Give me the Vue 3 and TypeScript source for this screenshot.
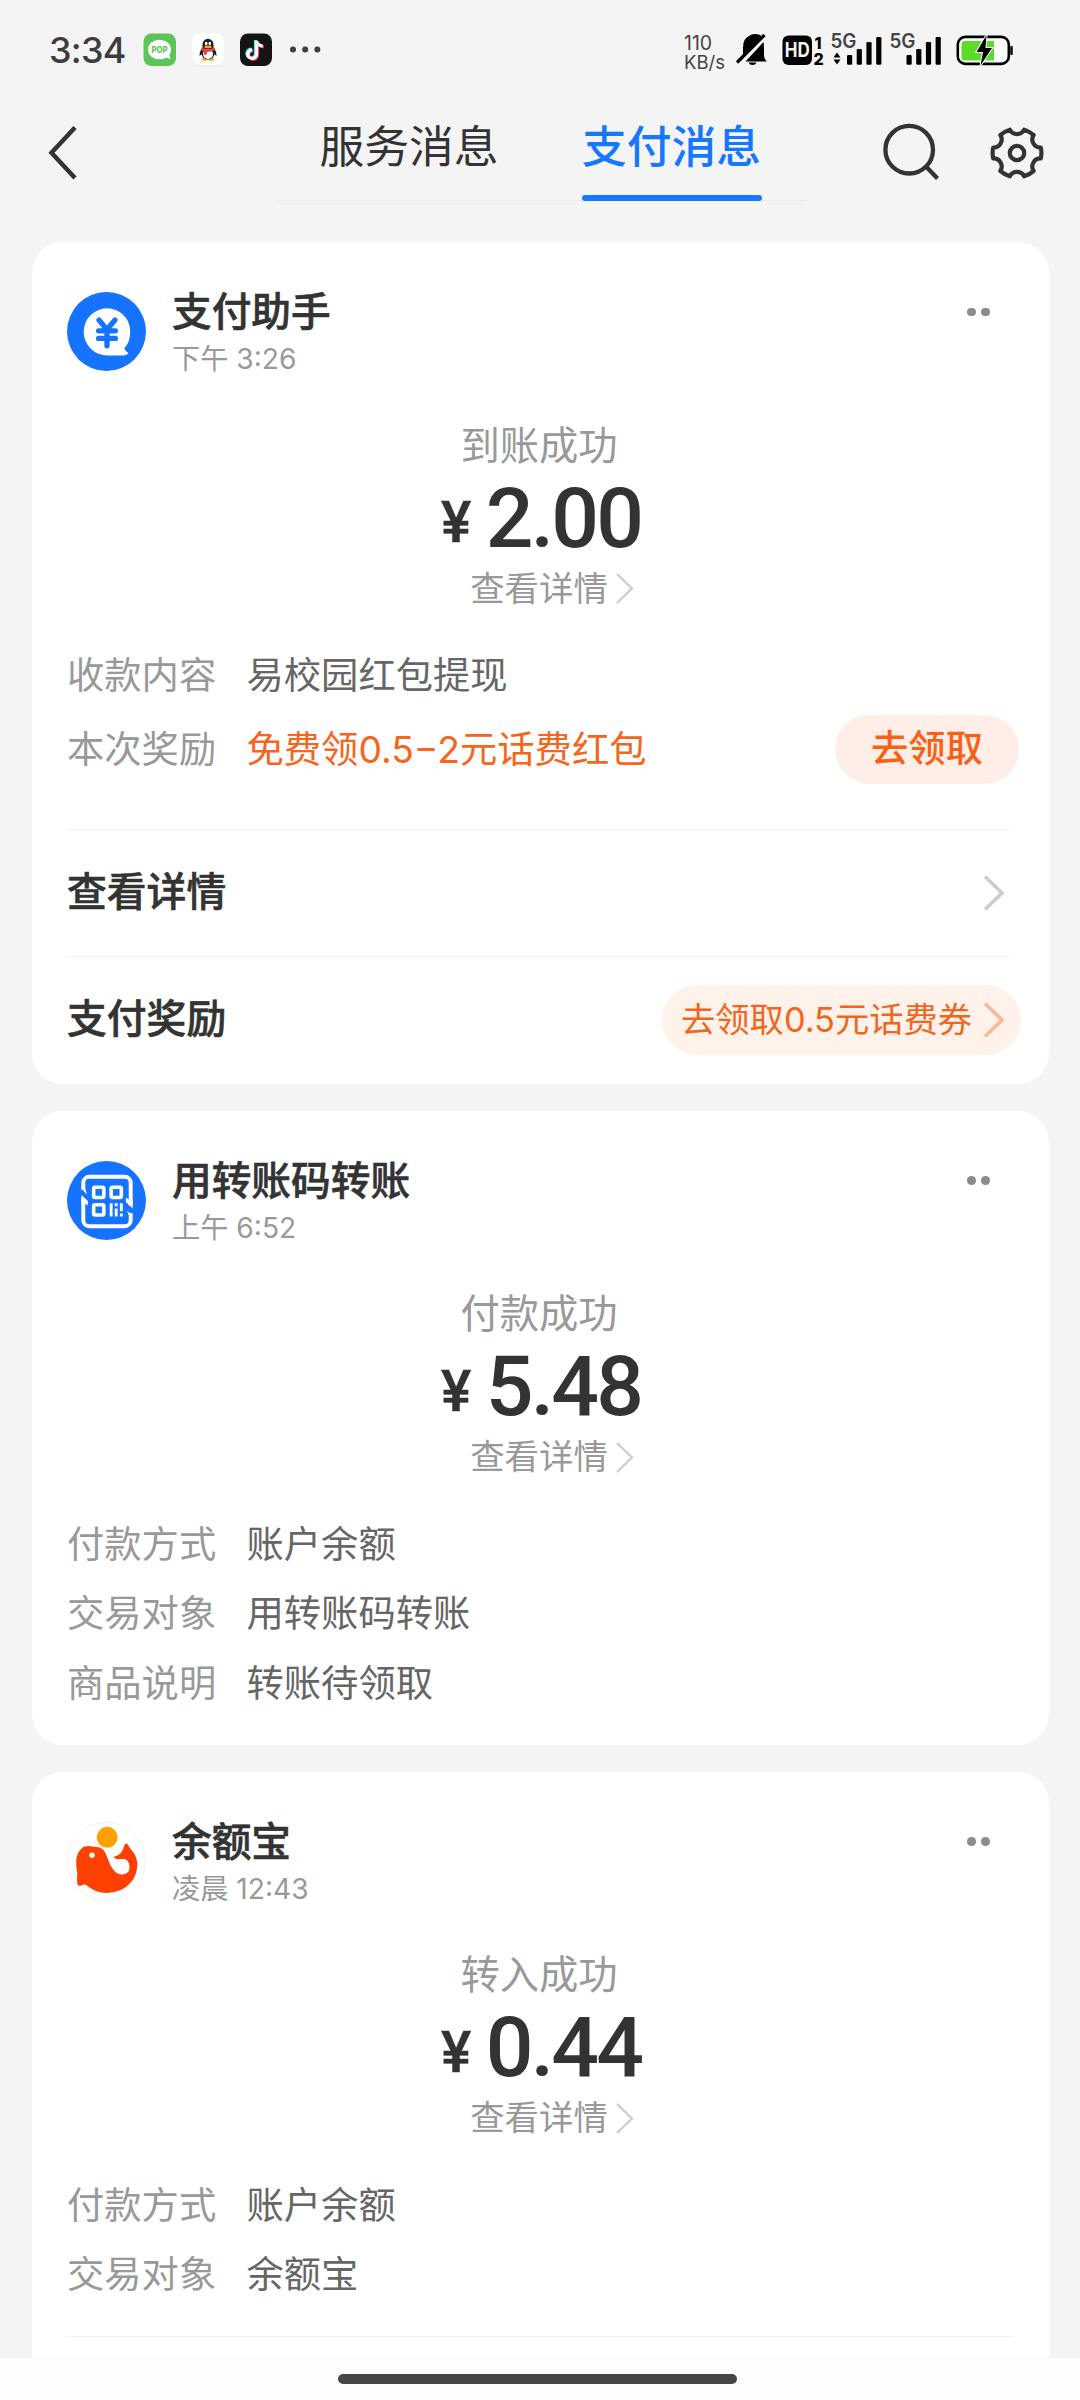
<script setup lang="ts">
interface Row {
  label: string
  value: string
  action?: string
}
interface Footer {
  title: string
  pill?: string
}
interface Message {
  icon: 'assistant' | 'qrcode' | 'whale'
  name: string
  time: string
  status: string
  amount: string
  rows: Row[]
  footers: Footer[]
}

const messages: Message[] = [
  {
    icon: 'assistant',
    name: '支付助手',
    time: '下午 3:26',
    status: '到账成功',
    amount: '2.00',
    rows: [
      { label: '收款内容', value: '易校园红包提现' },
      { label: '本次奖励', value: '免费领0.5−2元话费红包', action: '去领取' },
    ],
    footers: [{ title: '查看详情' }, { title: '支付奖励', pill: '去领取0.5元话费券' }],
  },
  {
    icon: 'qrcode',
    name: '用转账码转账',
    time: '上午 6:52',
    status: '付款成功',
    amount: '5.48',
    rows: [
      { label: '付款方式', value: '账户余额' },
      { label: '交易对象', value: '用转账码转账' },
      { label: '商品说明', value: '转账待领取' },
    ],
    footers: [],
  },
  {
    icon: 'whale',
    name: '余额宝',
    time: '凌晨 12:43',
    status: '转入成功',
    amount: '0.44',
    rows: [
      { label: '付款方式', value: '账户余额' },
      { label: '交易对象', value: '余额宝' },
    ],
    footers: [{ title: '' }],
  },
]

// Six-lobed gear: outer arcs joined by concave notches.
function gearPath(r: number, notch: number, cx: number, cy: number): string {
  const at = (deg: number) => {
    const a = ((deg - 90) * Math.PI) / 180
    return `${(cx + r * Math.cos(a)).toFixed(2)} ${(cy + r * Math.sin(a)).toFixed(2)}`
  }
  let d = `M${at(-17)}`
  for (let k = 0; k < 6; k++) {
    const c = k * 60
    d += `A${notch} ${notch} 0 0 0 ${at(c + 17)}A${r} ${r} 0 0 1 ${at(c + 43)}`
  }
  return d + 'Z'
}
const gear = gearPath(24.4, 8, 28, 28)
</script>

<template>
  <div class="screen">
    <div class="statusbar">
      <div class="clock">3:34</div>
      <svg class="app-icons" width="190" height="40" viewBox="140 30 190 40">
        <rect x="143.5" y="33.5" width="32.5" height="32.5" rx="8" fill="#5ec458" />
        <ellipse cx="159.5" cy="49.5" rx="11.5" ry="9.8" fill="#fff" />
        <path d="M164 57l6.5 2-1.500-5z" fill="#fff" />
        <text x="159.500" y="52.600" text-anchor="middle" font-size="8.500" font-weight="800" textLength="16" lengthAdjust="spacingAndGlyphs" fill="#5ec458">POP</text>
        <rect x="192" y="34" width="32" height="32.500" rx="8" fill="#e4e4e4" />
        <rect x="192" y="33.500" width="32" height="32" rx="8" fill="#fff" />
        <path d="M202 48q-3 4-2.500 8l2.500-2zM214 48q3 4 2.500 8l-2.500-2z" fill="#1d1f24" />
        <ellipse cx="204.500" cy="59.500" rx="3" ry="1.300" fill="#f5a623" />
        <ellipse cx="211.500" cy="59.500" rx="3" ry="1.300" fill="#f5a623" />
        <ellipse cx="208" cy="52.500" rx="6.800" ry="7" fill="#1d1f24" />
        <ellipse cx="208" cy="54" rx="5" ry="5" fill="#fff" />
        <path d="M202.500 48v-3.500a5.500 5.800 0 0 1 11 0v3.500z" fill="#1d1f24" />
        <ellipse cx="206.200" cy="43.500" rx="1.300" ry="1.800" fill="#fff" />
        <ellipse cx="209.800" cy="43.500" rx="1.300" ry="1.800" fill="#fff" />
        <ellipse cx="208" cy="46.900" rx="3.800" ry="1.400" fill="#f5a623" />
        <path d="M201.500 47.500q6.500 3.400 13 0l.500 2.500q-4 2-8 2l-.3 2.700h-2.600l-.2-3.200q-1.500-.5-2.700-1.400z" fill="#ea4335" />
        <rect x="240" y="33.500" width="32" height="32.500" rx="8" fill="#141414" />
        <g fill="none" stroke-width="3.200">
          <path d="M255.500 40v13.500a4.300 4.300 0 1 1-4.300-4.300M255.500 41q1.500 4.300 6.300 4.500" stroke="#25f4ee" />
          <path d="M257.500 41.500v13.500a4.300 4.300 0 1 1-4.300-4.300M257.500 42.500q1.500 4 6.300 4.300" stroke="#fe2c55" />
          <path d="M256.500 40.700v13.500a4.300 4.300 0 1 1-4.300-4.300M256.500 41.500q1.500 4.300 6.300 4.500" stroke="#fff" />
        </g>
        <g fill="#3d3d3d">
          <circle cx="293" cy="49.500" r="3" />
          <circle cx="305.200" cy="49.500" r="3" />
          <circle cx="317.300" cy="49.500" r="3" />
        </g>
      </svg>
      <div class="netspeed"><span>110</span><span class="unit">KB/s</span></div>
      <svg class="signals" width="290" height="40" viewBox="730 30 290 40">
        <path d="M740.500 61.500q2.500-2.500 2.500-7v-7q0-9 6-11.500 3-2.500 6.500-2 4 .2 6 2l-21.500 23.500zM745.500 61.500l18-19.500q.500 2 .500 5.500v7q0 4.500 3 7zM748.500 62.500h8q-1 2.500-4 2.500t-4-2.500z" fill="#000" />
        <path d="M737 62.500L764.500 35" stroke="#000" stroke-width="3.200" />
        <rect x="782.500" y="35.500" width="29.500" height="29.500" rx="6" fill="#000" />
        <text x="797.300" y="57.300" text-anchor="middle" font-size="19.500" font-weight="700" textLength="25" lengthAdjust="spacingAndGlyphs" fill="#f4f4f4">HD</text>
        <text x="814.500" y="48.500" font-size="16" font-weight="800">1</text>
        <text x="813.500" y="64.500" font-size="16" font-weight="800">2</text>
        <g font-size="19.500" font-weight="600" fill="#444">
          <text x="830.500" y="48.300" textLength="26" lengthAdjust="spacingAndGlyphs">5G</text>
          <text x="889.500" y="48.300" textLength="26" lengthAdjust="spacingAndGlyphs">5G</text>
        </g>
        <path d="M833.500 57.500l3.500-5 3.500 5zM833.500 59.500h7l-3.500 5z" fill="#000" />
        <g fill="#000">
          <rect x="847" y="55" width="5.200" height="9.800" rx="1.200" />
          <rect x="856.700" y="49" width="5.200" height="15.800" rx="1.200" />
          <rect x="866.400" y="42" width="5.200" height="22.800" rx="1.200" />
          <rect x="876.200" y="37" width="5.200" height="27.800" rx="1.200" />
          <rect x="906.500" y="55" width="5.200" height="9.800" rx="1.200" />
          <rect x="916.200" y="49" width="5.200" height="15.800" rx="1.200" />
          <rect x="925.900" y="42" width="5.200" height="22.800" rx="1.200" />
          <rect x="935.600" y="37" width="5.200" height="27.800" rx="1.200" />
        </g>
        <rect x="957.800" y="36.900" width="51" height="27" rx="7.500" fill="#fff" stroke="#000" stroke-width="2.600" />
        <rect x="1010.300" y="46" width="2.400" height="9" rx="1" fill="#000" />
        <path d="M965 41h29v19.500h-29a3.500 3.500 0 0 1-3.500-3.500v-12.500a3.500 3.500 0 0 1 3.500-3.500z" fill="#5ddb2c" />
        <path d="M986.500 35L976.500 52h6.500l-2.500 13.500L992 48h-6.500z" fill="#000" stroke="#fff" stroke-width="2" paint-order="stroke" />
      </svg>
    </div>

    <div class="navbar">
      <svg class="back" width="36" height="56" viewBox="0 0 36 56">
        <path d="M31 2.500L7.500 27.700 31 53" fill="none" stroke="#333" stroke-width="4.500" />
      </svg>
      <div class="tabs">
        <div class="tab"><span>服务消息</span></div>
        <div class="tab active"><span>支付消息</span></div>
      </div>
      <svg class="search" width="60" height="60" viewBox="0 0 60 60" fill="none" stroke="#333" stroke-width="4.300">
        <circle cx="29.200" cy="29.700" r="23.800" />
        <path d="M46 46.500L57.500 58.500" />
      </svg>
      <svg class="gear" width="56" height="56" viewBox="0 0 56 56" fill="none" stroke="#333" stroke-width="4.200" stroke-linejoin="round">
        <path :d="gear" />
        <circle cx="28" cy="28" r="7.200" />
      </svg>
    </div>

    <div class="feed">
      <section v-for="m in messages" :key="m.name" class="card">
        <header class="head">
          <svg class="avatar" width="79" height="79" viewBox="0 0 80 80">
            <template v-if="m.icon === 'assistant'">
              <circle cx="40" cy="40" r="40" fill="#1573ff" />
              <path d="M40.500 16.500a23.500 23.500 0 0 1 23.500 23.500q0 11-6 17 1 3 4 4.500-1 2.500-5 2.700H41a23.800 23.800 0 0 1-.500-47.700z" fill="#fff" />
              <path d="M32.500 28.500l8 9.500 8-9.500M40.500 38v16.500M32 39.300h17M32 47h17" fill="none" stroke="#1573ff" stroke-width="5.400" stroke-linecap="round" stroke-linejoin="round" />
            </template>
            <template v-else-if="m.icon === 'qrcode'">
              <circle cx="40" cy="40" r="40" fill="#1573ff" />
              <g fill="none" stroke="#fff" stroke-width="4">
                <path d="M16.500 29v-7a6 6 0 0 1 6-6h36a6 6 0 0 1 6 6v23" />
                <path d="M16.500 38v22a6 6 0 0 0 6 6h36a6 6 0 0 0 6-6v-7" />
              </g>
              <path d="M14.600 27.500h3.800l2 7zM14.600 34.500l6.500 6v4.500l-2.700-2h-3.800zM66.400 48l-6.800-6.500v-4.500l3 2h3.800zM60.500 50.500l5.900 4h-3.800z" fill="#fff" />
              <g fill="none" stroke="#fff" stroke-width="3.600">
                <rect x="27" y="26.600" width="10.300" height="10.300" rx="1.500" />
                <rect x="44.700" y="26.600" width="10.300" height="10.300" rx="1.500" />
                <rect x="27" y="44.400" width="10.300" height="10.300" rx="1.500" />
              </g>
              <path d="M44.700 42.800v13.400M49.800 42.800v3M49.800 48v8.200M55 42.800v8M55 53.200v3" stroke="#fff" stroke-width="2.900" />
            </template>
            <template v-else>
              <circle cx="40" cy="40" r="39.500" fill="#fff" stroke="#f1f1f1" />
              <circle cx="40.700" cy="15.500" r="10.600" fill="#ffa000" />
              <path d="M17.500 25q4-1.500 8.500 0 7-.5 10.800 3 2.500 3 4.500 9 2 7 5.500 11 4 5.500 9.500 5.200 7.500-.5 7-8.700-1-6.500-6-7-3-.2-6 .2-3.500-.500-4-2.500 6.500-1.500 8.500-5.500 1.500-3.500 2.700-7.200 1.500-1.700 3 .3 2 3.700 5.300 7.200 4.500 6 4.500 14-1 10.500-6 16.500-9 11-25 11.300-12 0-21.500-8.600-2.300-.2-4.300 1-4 1-4-1.700-.7-4-.2-9 .5-1.500-.5-5.500-.8-6-.3-11 1.500-8 8-12.500z" fill="#ff4000" />
              <circle cx="25.300" cy="33.700" r="2.700" fill="#fff" />
            </template>
          </svg>
          <div class="who">
            <div class="name">{{ m.name }}</div>
            <div class="time">{{ m.time }}</div>
          </div>
          <div class="more"><i></i><i></i></div>
        </header>

        <div class="summary">
          <div class="status">{{ m.status }}</div>
          <div class="amount"><span class="yen">¥</span><span class="num">{{ m.amount }}</span></div>
          <div class="detail">
            <span>查看详情</span>
            <svg width="18" height="31" viewBox="0 0 18 31"><path d="M1 1l15 14.500L1 30" fill="none" stroke="#ccc" stroke-width="2.300" /></svg>
          </div>
        </div>

        <div class="rows">
          <div v-for="r in m.rows" :key="r.label" class="row" :class="{ reward: r.action }">
            <span class="label">{{ r.label }}</span>
            <span class="value">{{ r.value }}</span>
            <span v-if="r.action" class="claim">{{ r.action }}</span>
          </div>
        </div>

        <div v-for="f in m.footers" :key="f.title" class="footer">
          <span class="title">{{ f.title }}</span>
          <span v-if="f.pill" class="pill">
            <span class="pill-text">{{ f.pill }}</span>
            <svg width="22" height="36" viewBox="0 0 22 36"><path d="M2 1.500l17 16.500L2 34.500" fill="none" stroke="#fcb896" stroke-width="3.600" /></svg>
          </span>
          <svg v-else-if="f.title" class="arrow" width="22" height="36" viewBox="0 0 22 36"><path d="M2 1.500l17 16.500L2 34.500" fill="none" stroke="#ccc" stroke-width="3.600" /></svg>
        </div>
      </section>
    </div>

    <div class="home"><div class="bar"></div></div>
  </div>
</template>

<style>
body {
  background: #fdfdfd;
}
</style>

<style scoped>
.screen {
  width: 1080px;
  height: 2400px;
  overflow: hidden;
  display: flex;
  flex-direction: column;
  background: #f4f4f4;
  color: #333;
  font-family: Inter, 'Noto Sans CJK SC', sans-serif;
}
svg {
  display: block;
  flex: none;
}
.statusbar {
  display: flex;
  flex: none;
  height: 100px;
  box-sizing: border-box;
  padding: 30px 60px 0 49px;
}
.clock {
  width: 91px;
  font-size: 36px;
  line-height: 40px;
  font-weight: 500;
  letter-spacing: -0.800px;
  color: #3d3d3d;
  white-space: nowrap;
}
.netspeed {
  width: 46px;
  margin-left: 354px;
  display: flex;
  flex-direction: column;
  font-size: 19.500px;
  line-height: 19px;
  padding-top: 4px;
  color: #444;
}
.unit {
  font-size: 18.500px;
}
.navbar {
  display: flex;
  flex: none;
  height: 142px;
}
.back {
  margin: 25px 0 0 44px;
}
.tabs {
  display: flex;
  height: 101px;
  width: 527px;
  margin-left: 198px;
  box-sizing: border-box;
  padding-left: 40px;
  gap: 80.500px;
  border-bottom: 1px solid #ebebeb;
}
.tab {
  width: 182px;
  height: 101px;
  font-size: 44.800px;
  line-height: 95px;
  text-align: center;
  white-space: nowrap;
}
.tab.active {
  color: #1677ff;
  font-weight: 500;
}
.tab.active::after {
  content: '';
  display: block;
  width: 180px;
  height: 5.500px;
  margin: 0 auto;
  border-radius: 3px;
  background: #1677ff;
}
.search {
  margin: 20px 0 0 75px;
}
.gear {
  margin: 24.700px 0 0 49px;
}
.feed {
  height: 2115.500px;
  flex: none;
  overflow: hidden;
  display: flex;
  flex-direction: column;
  gap: 27px;
}
.card {
  flex: none;
  margin: 0 31.500px;
  padding: 50px 35.500px 0;
  background: #fff;
  border-radius: 31px;
}
.card:last-child {
  border-radius: 31px 31px 0 0;
}
.head {
  display: flex;
  height: 79px;
}
.who {
  flex: 1;
  margin: -3px 0 0 26px;
}
.name {
  font-size: 39.700px;
  line-height: 46px;
  font-weight: 500;
  -webkit-text-stroke: 0.600px #333;
}
.time {
  margin-top: 8px;
  font-size: 28.200px;
  line-height: 32px;
  color: #999;
}
.more {
  display: flex;
  gap: 5.500px;
  margin: 15.500px 23px 0 0;
}
.more i {
  width: 8.600px;
  height: 8.600px;
  border-radius: 50%;
  background: #8c8c8c;
}
.summary {
  display: flex;
  flex-direction: column;
  align-items: center;
  padding: 50.500px 2px 0 0;
  color: #999;
}
.status {
  font-size: 39.300px;
  line-height: 48px;
}
.amount {
  display: flex;
  align-items: flex-start;
  height: 98px;
  font-family: Roboto, sans-serif;
  font-weight: 500;
  color: #333;
  padding-left: 4px;
}
.yen {
  margin: 4.500px 14.500px 0 0;
  font-size: 57px;
  line-height: 98px;
  -webkit-text-stroke: 0.500px #333;
}
.num {
  font-size: 84px;
  line-height: 98px;
  letter-spacing: -2.800px;
}
.detail {
  display: flex;
  align-items: center;
  font-size: 34.400px;
  line-height: 42px;
}
.detail svg {
  margin: 0 -26px 0 8px;
}
.rows {
  padding: 31.700px 0 26.300px;
}
.row {
  display: flex;
  align-items: center;
  height: 69.500px;
  font-size: 37.300px;
  line-height: 50px;
  white-space: nowrap;
}
.label {
  width: 179.500px;
  color: #999;
}
.value {
  color: #666;
}
.reward {
  height: 79px;
  margin-bottom: 13px;
}
.reward .value {
  color: #f5651d;
}
.claim {
  margin: -2px -6px 0 auto;
  width: 184px;
  height: 69px;
  border-radius: 35px;
  background: #ffeee8;
  color: #fa6015;
  font-weight: 500;
  line-height: 68px;
  text-align: center;
}
.footer {
  display: flex;
  align-items: center;
  height: 127.300px;
  box-sizing: border-box;
  margin: 0 1px 0 -1px;
  padding-left: 1px;
  border-top: 1.500px solid #f2f2f2;
}
.title {
  flex: 1;
  font-size: 39.800px;
  line-height: 50px;
  margin-top: -2px;
  font-weight: 500;
  -webkit-text-stroke: 0.600px #333;
}
.arrow {
  margin-right: 7px;
}
.pill {
  display: flex;
  align-items: center;
  box-sizing: border-box;
  width: 359px;
  height: 70px;
  margin-right: -9px;
  padding: 0 16px 0 19px;
  justify-content: space-between;
  border-radius: 35px;
  background: #fff2ea;
  color: #f0661f;
  font-size: 34.300px;
  white-space: nowrap;
}
.pill-text {
  line-height: 44px;
}
.home {
  flex: 1;
  background: #fdfdfd;
  display: flex;
  justify-content: center;
}
.bar {
  width: 399px;
  height: 10px;
  margin: 16.500px 5px 0 0;
  border-radius: 5px;
  background: #464646;
}
</style>
